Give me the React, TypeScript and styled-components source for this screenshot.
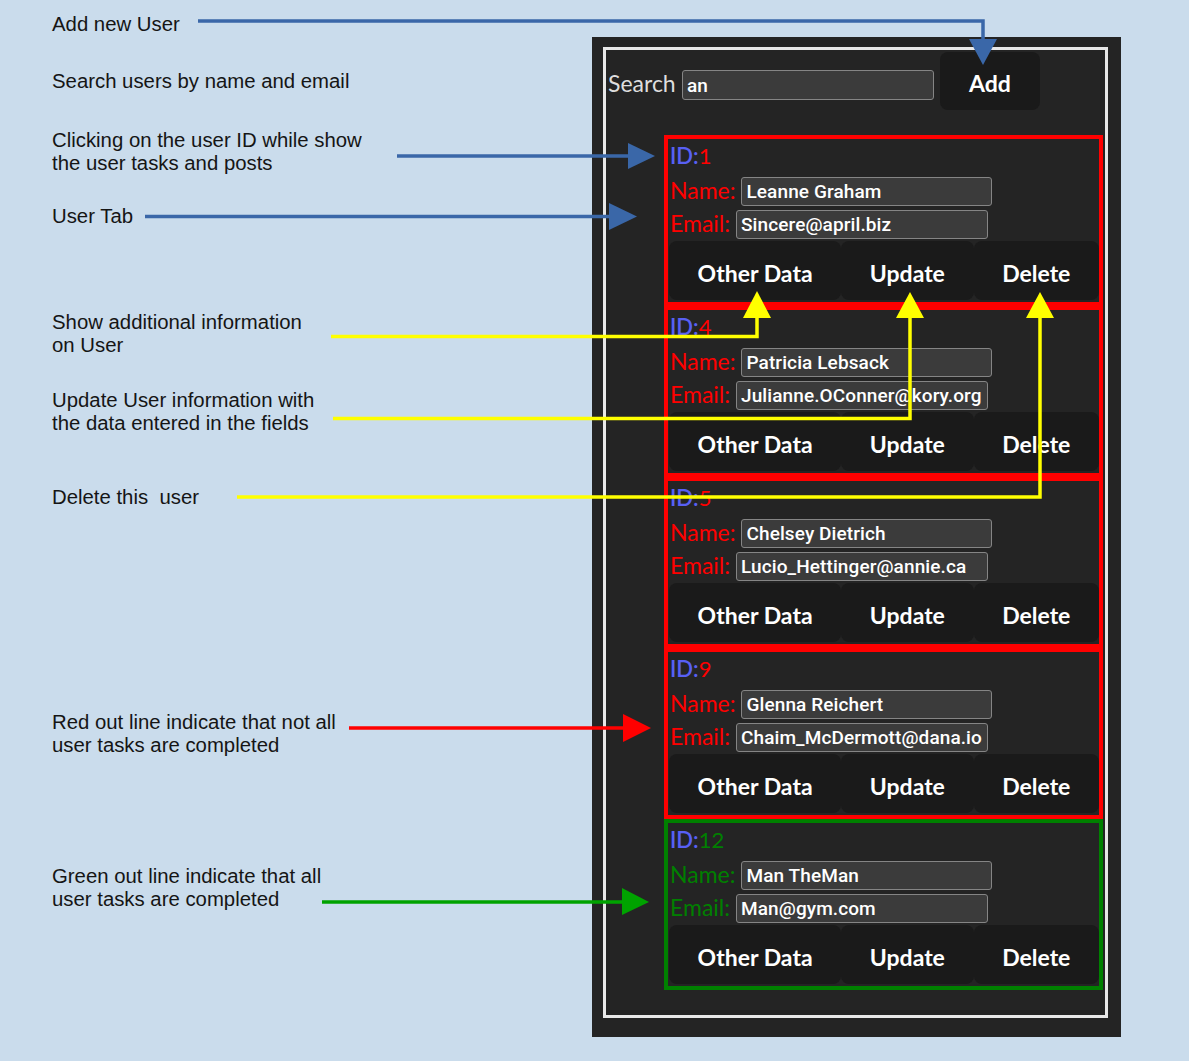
import React from "react";
import styled, { createGlobalStyle } from "styled-components";

const GlobalStyle = createGlobalStyle`
  html, body { margin: 0; padding: 0; background: #cadcec; }
  body { width: 1189px; height: 1061px; overflow: hidden; }
  #root { width: 1189px; height: 1061px; }
`;

const Page = styled.div`
  position: relative;
  width: 1189px;
  height: 1061px;
  display: flex;
  align-items: flex-start;
  background: #cadcec;
`;

const Notes = styled.div`
  width: 592px;
  box-sizing: border-box;
  padding: 12.6px 0 0 52px;
  display: flex;
  flex-direction: column;
  font-family: "Liberation Sans", Arial, sans-serif;
  font-size: 20.35px;
  line-height: 23px;
  color: #151515;
`;

const Note = styled.p<{ $gap: number }>`
  margin: ${(p) => p.$gap}px 0 0;
`;

const Panel = styled.div`
  margin-top: 37px;
  width: 529px;
  box-sizing: border-box;
  padding: 10px 13px 19px 11px;
  background: #242424;
`;

const Frame = styled.div`
  border: 3px solid #e8e8e8;
  padding: 2px 0 25px 2px;
  display: flex;
  flex-direction: column;
`;

const Toolbar = styled.div`
  display: flex;
  align-items: center;
  height: 58px;
`;

const SearchLabel = styled.label`
  font-family: Lato, "Open Sans", sans-serif;
  font-size: 23px;
  color: #dedede;
  margin-top: 3px;
  width: 74px;
`;

const TextInput = styled.input<{ $w: number }>`
  box-sizing: border-box;
  width: ${(p) => p.$w}px;
  height: 29px;
  margin: 0;
  padding: 0 4px;
  background: #3b3b3b;
  border: 1px solid #858585;
  border-radius: 3px;
  color: #ffffff;
  font-family: Roboto, "Liberation Sans", sans-serif;
  font-weight: 500;
  font-size: 19px;
  letter-spacing: 0.1px;
  outline: none;
`;

const SearchInput = styled(TextInput)`
  height: 30px;
  margin-top: 8px;
`;

const AddButton = styled.button`
  width: 100px;
  height: 58px;
  margin-left: 6px;
  padding: 4px 0 0;
  border: 1px solid transparent;
  border-radius: 8px;
  background: #1a1a1a;
  color: #ffffff;
  font-family: Lato, "Open Sans", sans-serif;
  font-weight: 700;
  font-size: 23px;
`;

const CardList = styled.div`
  margin: 25px 2px 0 56px;
  display: flex;
  flex-direction: column;
`;

const Card = styled.div<{ $done: boolean }>`
  border: 4px solid ${(p) => (p.$done ? "#008000" : "#ff0000")};
  color: ${(p) => (p.$done ? "#008000" : "#ff0000")};
  padding: 0 0 2px 1px;
  display: flex;
  flex-direction: column;
  font-family: Lato, "Open Sans", sans-serif;
  font-size: 23px;
`;

const IdLine = styled.div`
  height: 36px;
  line-height: 33px;
  padding-left: 1px;
  font-size: 22px;
`;

const IdKey = styled.span`
  color: #5860f4;
  font-weight: 600;
  cursor: pointer;
`;

const FieldRow = styled.div`
  height: 33px;
  display: flex;
  align-items: center;
  padding-left: 1px;
`;

const FieldLabel = styled.span`
  margin: 0 6px 4px 0;
`;

const ButtonRow = styled.div`
  height: 59px;
  display: flex;
`;

const ActionButton = styled.button`
  flex: 1 1 auto;
  height: 59px;
  margin: 0;
  padding: 4px 20px 0;
  border: 1px solid transparent;
  border-radius: 8px;
  background: #1a1a1a;
  color: #ffffff;
  font-family: Lato, "Open Sans", sans-serif;
  font-weight: 700;
  font-size: 23px;
  white-space: nowrap;
`;

const Overlay = styled.svg`
  position: absolute;
  left: 0;
  top: 0;
  pointer-events: none;
`;

type User = { id: number; name: string; email: string; done: boolean };

const users: User[] = [
  { id: 1, name: "Leanne Graham", email: "Sincere@april.biz", done: false },
  { id: 4, name: "Patricia Lebsack", email: "Julianne.OConner@kory.org", done: false },
  { id: 5, name: "Chelsey Dietrich", email: "Lucio_Hettinger@annie.ca", done: false },
  { id: 9, name: "Glenna Reichert", email: "Chaim_McDermott@dana.io", done: false },
  { id: 12, name: "Man TheMan", email: "Man@gym.com", done: true },
];

const notes: { gap: number; lines: string[] }[] = [
  { gap: 0, lines: ["Add new User"] },
  { gap: 34.4, lines: ["Search users by name and email"] },
  { gap: 35.6, lines: ["Clicking on the user ID while show", "the user tasks and posts"] },
  { gap: 30.6, lines: ["User Tab"] },
  { gap: 82.8, lines: ["Show additional information", "on User"] },
  { gap: 32.2, lines: ["Update User information with", "the data entered in the fields"] },
  { gap: 50.8, lines: ["Delete this \u00a0user"] },
  { gap: 202, lines: ["Red out line indicate that not all", "user tasks are completed"] },
  { gap: 108, lines: ["Green out line indicate that all", "user tasks are completed"] },
];

type Arrow = { color: string; points: string; head: string };

const arrows: Arrow[] = [
  { color: "#3a67a8", points: "198,21 983,21 983,40", head: "969,39 997,39 983,65" },
  { color: "#3a67a8", points: "397,156 630,156", head: "628,143 628,169 655,156" },
  { color: "#3a67a8", points: "145,216.5 612,216.5", head: "609,203 609,230 637,216.5" },
  { color: "#ffff00", points: "331,336.5 757,336.5 757,318", head: "743,318 771,318 757,291" },
  { color: "#ffff00", points: "333,418.5 910,418.5 910,318", head: "896,318 924,318 910,292" },
  { color: "#ffff00", points: "237,497 1040,497 1040,318", head: "1026,318 1054,318 1040,292" },
  { color: "#ff0000", points: "349,728 625,728", head: "623,714 623,742 651,728" },
  { color: "#00a300", points: "322,902 624,902", head: "622,888 622,915 649,902" },
];

export default function App() {
  return (
    <>
      <GlobalStyle />
      <Page>
        <Notes>
          {notes.map((n, i) => (
            <Note key={i} $gap={n.gap}>
              {n.lines.map((l, j) => (
                <React.Fragment key={j}>
                  {j > 0 && <br />}
                  {l}
                </React.Fragment>
              ))}
            </Note>
          ))}
        </Notes>
        <Panel>
          <Frame>
            <Toolbar>
              <SearchLabel>Search</SearchLabel>
              <SearchInput $w={252} defaultValue="an" />
              <AddButton>Add</AddButton>
            </Toolbar>
            <CardList>
              {users.map((u) => (
                <Card key={u.id} $done={u.done}>
                  <IdLine>
                    <IdKey>ID:</IdKey>
                    {u.id}
                  </IdLine>
                  <FieldRow>
                    <FieldLabel>Name:</FieldLabel>
                    <TextInput $w={251} defaultValue={u.name} />
                  </FieldRow>
                  <FieldRow>
                    <FieldLabel>Email:</FieldLabel>
                    <TextInput $w={252} defaultValue={u.email} />
                  </FieldRow>
                  <ButtonRow>
                    <ActionButton>Other Data</ActionButton>
                    <ActionButton>Update</ActionButton>
                    <ActionButton>Delete</ActionButton>
                  </ButtonRow>
                </Card>
              ))}
            </CardList>
          </Frame>
        </Panel>
        <Overlay width={1189} height={1061} viewBox="0 0 1189 1061">
          {arrows.map((a, i) => (
            <g key={i}>
              <polyline points={a.points} fill="none" stroke={a.color} strokeWidth={3.5} />
              <polygon points={a.head} fill={a.color} />
            </g>
          ))}
        </Overlay>
      </Page>
    </>
  );
}
